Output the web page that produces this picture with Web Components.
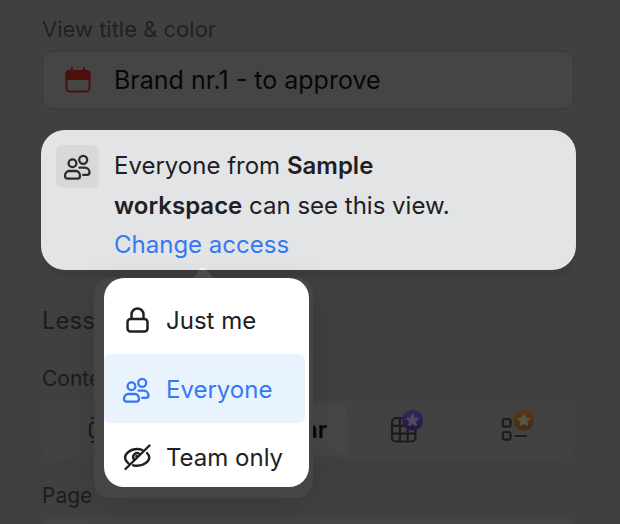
<!DOCTYPE html>
<html lang="en">
<head>
<meta charset="utf-8">
<title>View settings</title>
<style>
  body {
    margin: 0;
    background: #404040;
    color: #1f2023;
    font-family: Inter, "Liberation Sans", sans-serif;
    font-size: 24px;
  }
</style>
</head>
<body>
<view-settings></view-settings>

<script>
const icons = {
  calendar: `<svg width="28" height="28" viewBox="0 0 28 28" fill="none" stroke="currentColor" stroke-width="2" stroke-linecap="round"><rect x="2.5" y="5" width="23" height="20.500" rx="3.500"/><path d="M2.500 13V8q0-3 3-3h17q3 0 3 3v5z" fill="currentColor"/><path d="M8 2v4M20 2v4"/></svg>`,
  people: `<svg width="28" height="28" viewBox="1 0 28 28" fill="none" stroke="currentColor" stroke-width="2.300" stroke-linecap="round" stroke-linejoin="round"><circle cx="9.500" cy="10.200" r="3.900"/><circle cx="20.200" cy="6.800" r="4"/><path d="M6.300 18h6.500c2.600 0 4.200 2.500 4.200 5 0 1.800-1 2.700-2.600 2.700H4.700C3 25.700 2 24.800 2 23c0-2.500 1.700-5 4.300-5z"/><path d="M16.500 14.700h5.300c2.800 0 4.700 2.300 4.700 4.800 0 1.400-.9 2.300-2.400 2.300h-4"/></svg>`,
  lock: `<svg width="28" height="28" viewBox="0 0 28 28" fill="none" stroke="currentColor" stroke-width="2.500"><rect x="4.500" y="13" width="20" height="12.500" rx="3"/><path d="M8.500 13V8.500a6 6 0 0 1 12 0V13"/></svg>`,
  hidden: `<svg width="28" height="28" viewBox="0 0 28 28" fill="none" stroke="currentColor" stroke-width="2.400" stroke-linecap="round" stroke-linejoin="round"><path d="M2.500 26L26.500 2.500M5.500 20.500C3.300 18.400 2 16.500 2 14.500 2 11 7 6 14 6c2 0 3.800.3 5.300 1M24 10c1.500 1.500 2.300 3 2.300 4.500 0 3.500-5.300 8.300-12.300 8.300-1.300 0-2.600-.2-3.800-.5M11 16.500a4 4 0 0 1 5-6M13.500 14v-1"/></svg>`,
  board: `<svg width="28" height="28" viewBox="-2 0 28 28" fill="none" stroke="currentColor" stroke-width="2.200" stroke-linecap="round"><path d="M5 2h18M5 26h18"/><rect x="3" y="6.500" width="22" height="15" rx="4"/></svg>`,
  grid: `<svg width="36" height="36" viewBox="-3 0 36 36" fill="none"><defs><linearGradient id="v" x2="0" y2="1"><stop stop-color="#36285c"/><stop offset="1" stop-color="#251544"/></linearGradient></defs><g stroke="#1c1c1c" stroke-width="2.200"><rect x="3" y="10" width="23.500" height="23.500" rx="4"/><path d="M10.800 10v23.500M18.700 10v23.500M3 17.800h23.500M3 25.600h23.500"/></g><circle cx="23.600" cy="12" r="10.600" fill="url(#v)"/><path d="M23.600 6l1.900 3.900 4.200.6-3 3 .7 4.200-3.800-2-3.800 2 .7-4.200-3-3 4.200-.6z" fill="#504a5f" stroke="#504a5f" stroke-linejoin="round"/></svg>`,
  list: `<svg width="36" height="36" viewBox="-1 0 36 36" fill="none"><defs><linearGradient id="o" x2="0" y2="1"><stop stop-color="#553b16"/><stop offset="1" stop-color="#432d10"/></linearGradient></defs><g stroke="#1c1c1c" stroke-width="2.200" stroke-linecap="round"><rect x="2.800" y="11" width="7.700" height="7.700" rx="2"/><rect x="2.800" y="24" width="7.700" height="7.700" rx="2"/><path d="M15.500 28h10.500"/></g><circle cx="23.800" cy="12" r="10.600" fill="url(#o)"/><path d="M23.800 6l1.900 3.900 4.200.6-3 3 .7 4.200-3.800-2-3.800 2 .7-4.200-3-3 4.200-.6z" fill="#5a5347" stroke="#5a5347" stroke-linejoin="round"/></svg>`
};

class UiIcon extends HTMLElement {
  constructor() {
    super();
    this.attachShadow({ mode: "open" });
    this.shadowRoot.innerHTML = `
<style>
:host{ display: block; flex: none; }
svg{ display: block; overflow: visible; }
</style>
${icons[this.getAttribute("name")]}`;
  }
}

const fieldTemplate = document.createElement("template");
fieldTemplate.innerHTML = `
<style>
:host{ display: block; }
label{
  display: block;
  color: #202124;
  font-size: 22px;
  line-height: 24px;
  margin-bottom: 10px;
}
.box{
  display: flex;
  align-items: center;
  gap: 22px;
  height: 56px;
  padding: 0 21px;
  border: 1px solid #3b3b3b;
  border-radius: 10px;
  background: #454545;
}
ui-icon{ color: #4d0f0b; }
input{
  flex: 1;
  min-width: 0;
  padding: 0;
  border: 0;
  outline: 0;
  background: none;
  color: #070707;
  font: inherit;
  font-size: 25px;
}
</style>
<label for="title"><slot></slot></label>
<div class="box">
  <ui-icon name="calendar"></ui-icon>
  <input id="title" type="text">
</div>
`;

class TitleField extends HTMLElement {
  constructor() {
    super();
    this.attachShadow({ mode: "open" });
    this.shadowRoot.appendChild(fieldTemplate.content.cloneNode(true));
    this.shadowRoot.querySelector("#title").value = this.getAttribute("value");
  }
}

const cardTemplate = document.createElement("template");
cardTemplate.innerHTML = `
<style>
:host{
  display: flex;
  align-items: flex-start;
  gap: 15px;
  position: relative;
  padding: 15px 15px 10px;
  border-radius: 24px;
  background: #e3e4e6;
  box-shadow: 0 9px 0 -2px #3b3c3e;
}
.tile{
  display: grid;
  place-items: center;
  width: 43px;
  height: 43px;
  border-radius: 7px;
  background: #d7d8da;
  color: #2b2c2e;
}
p{ margin: 0; max-width: 350px; padding-top: 1px; line-height: 40px; }
::slotted(b){ font-weight: 600; }
a{ display: block; line-height: 30px; padding-top: 4px; color: #3478f6; text-decoration: none; }
</style>
<div class="tile"><ui-icon name="people"></ui-icon></div>
<div>
  <p><slot></slot></p>
  <a href="#access">Change access</a>
</div>
<slot name="menu"></slot>
`;

class AccessCard extends HTMLElement {
  constructor() {
    super();
    this.attachShadow({ mode: "open" });
    this.shadowRoot.appendChild(cardTemplate.content.cloneNode(true));
  }
}

const menuTemplate = document.createElement("template");
menuTemplate.innerHTML = `
<style>
:host{
  display: block;
  position: absolute;
  z-index: 1;
  top: calc(100% + 8px);
  left: 53px;
  padding: 0 4px 11px 10px;
  border-radius: 16px;
  background: #454545;
  box-shadow: 0 6px 32px #00000020;
}
.tip{
  position: absolute;
  top: -10px;
  left: 99px;
  width: 20px;
  height: 10px;
  background: linear-gradient(#f4f4f4 2px, #4b4b4b 2px);
  clip-path: polygon(40% 0, 60% 0, 100% 100%, 0 100%);
}
.list{
  width: 201px;
  padding-right: 4px;
  overflow: hidden;
  border-radius: 20px;
  background: #ffffff;
}
</style>
<div class="tip"></div>
<div class="list" role="menu"><slot></slot></div>
`;

class AccessMenu extends HTMLElement {
  constructor() {
    super();
    this.attachShadow({ mode: "open" });
    this.shadowRoot.appendChild(menuTemplate.content.cloneNode(true));
  }
}

class MenuOption extends HTMLElement {
  constructor() {
    super();
    this.attachShadow({ mode: "open" });
    this.shadowRoot.innerHTML = `
<style>
:host{ display: block; }
button{
  display: flex;
  align-items: center;
  gap: 15px;
  width: 100%;
  height: 69px;
  padding: 2px 0 0 19px;
  border: 0;
  border-radius: 6px;
  background: none;
  color: #202124;
  font: inherit;
  white-space: nowrap;
}
:host([selected]) button{ background: #e9f3fe; color: #3478f6; }
:host(:first-child) button{ height: 76px; padding-top: 8px; }
:host(:last-child) button{ height: 64px; padding-top: 4px; }
</style>
<button type="button" role="menuitem"><ui-icon name="${this.getAttribute("icon")}"></ui-icon><slot></slot></button>`;
  }
}

const tabsTemplate = document.createElement("template");
tabsTemplate.innerHTML = `
<style>
:host{
  display: grid;
  grid-template-columns: 1fr 192px 1fr 1fr;
  height: 59px;
  border-radius: 10px;
  background: #424242;
}
button{
  display: flex;
  align-items: center;
  justify-content: center;
  padding: 0;
  border: 0;
  background: none;
  color: #1c1c1c;
  font: inherit;
}
.active{
  justify-content: flex-end;
  margin: 4px 0;
  padding-right: 20px;
  border-radius: 6px;
  background: #464646;
  color: #070707;
  font-weight: 600;
}
.pro{ padding-bottom: 8px; }
</style>
<button type="button" aria-label="Board"><ui-icon name="board"></ui-icon></button>
<button type="button" class="active">Calendar</button>
<button type="button" class="pro" aria-label="Grid"><ui-icon name="grid"></ui-icon></button>
<button type="button" class="pro" aria-label="List"><ui-icon name="list"></ui-icon></button>
`;

class ViewTabs extends HTMLElement {
  constructor() {
    super();
    this.attachShadow({ mode: "open" });
    this.shadowRoot.appendChild(tabsTemplate.content.cloneNode(true));
  }
}

const settingsTemplate = document.createElement("template");
settingsTemplate.innerHTML = `
<style>
:host{
  display: block;
  overflow: hidden;
  box-sizing: border-box;
  height: 100vh;
  padding: 17px 46px 0 42px;
}
access-card{ margin: 21px -2px 0 -1px; }
h2, h3{ margin: 0; font-weight: 400; color: #1c1c1c; }
h2{ margin-top: 36px; font-size: 24px; line-height: 30px; }
h3{ font-size: 21px; line-height: 24px; }
.content{ margin: 31px 0 9px; }
.page{ margin: 25px 0 9px; }
.next{ height: 56px; border-radius: 10px; background: #454545; }
</style>
<title-field value="Brand nr.1 - to approve">View title &amp; color</title-field>
<access-card>
  Everyone from <b>Sample workspace</b> can see this view.
  <access-menu slot="menu">
    <menu-option icon="lock">Just me</menu-option>
    <menu-option icon="people" selected>Everyone</menu-option>
    <menu-option icon="hidden">Team only</menu-option>
  </access-menu>
</access-card>
<h2>Less</h2>
<h3 class="content">Content</h3>
<view-tabs></view-tabs>
<h3 class="page">Page</h3>
<div class="next"></div>
`;

class ViewSettings extends HTMLElement {
  constructor() {
    super();
    this.attachShadow({ mode: "open" });
    this.shadowRoot.appendChild(settingsTemplate.content.cloneNode(true));
  }
}

customElements.define("ui-icon", UiIcon);
customElements.define("title-field", TitleField);
customElements.define("menu-option", MenuOption);
customElements.define("access-menu", AccessMenu);
customElements.define("access-card", AccessCard);
customElements.define("view-tabs", ViewTabs);
customElements.define("view-settings", ViewSettings);
</script>
</body>
</html>
